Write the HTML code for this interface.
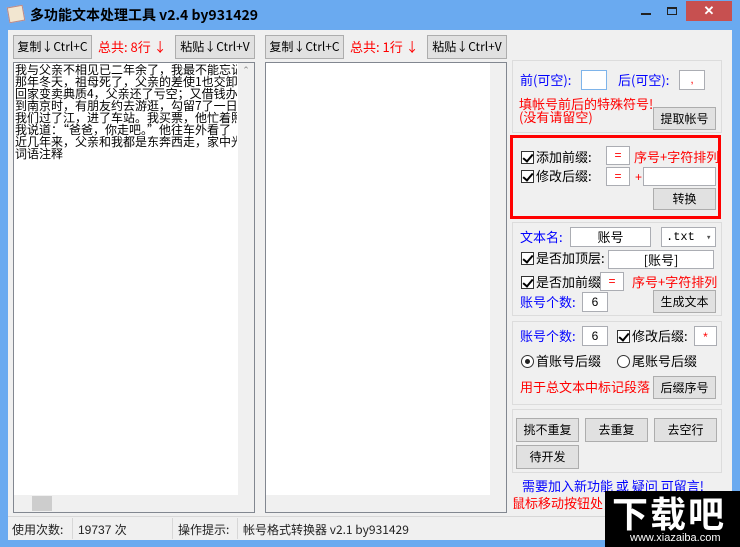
<!DOCTYPE html>
<html><head><meta charset="utf-8"><style>
*{box-sizing:border-box;margin:0;padding:0}
body{width:740px;height:547px;background:#6aaaf0;position:relative;overflow:hidden;font-family:"Liberation Sans","Noto Sans CJK SC",sans-serif;font-size:12px;color:#000}
.a{position:absolute;white-space:nowrap;line-height:14px}
.client{position:absolute;left:8px;top:30px;width:724px;height:510px;background:#f0f0f0}
.btn{position:absolute;background:#e1e1e1;border:1px solid #adadad;text-align:center;font-size:12px;font-family:"Noto Sans CJK SC",sans-serif;overflow:hidden}
.inp{position:absolute;background:#fff;border:1px solid #abadb3;text-align:center;font-size:12px;overflow:hidden}
.grp{position:absolute;border:1px solid #dcdcdc}
.cb{display:inline-block;width:13px;height:13px;border:1px solid #333;background:#fff;vertical-align:-2px;margin-right:2px;position:relative}
.cb:after{content:"";position:absolute;left:3px;top:0px;width:4px;height:8px;border:solid #000;border-width:0 2px 2px 0;transform:rotate(40deg)}
.blue{color:#0000ff}.red{color:#f00}
.ta{position:absolute;background:#fff;border:1px solid #828790}
.cn{font-family:"Noto Sans CJK SC",sans-serif;font-size:13px}
</style></head><body>
<div class="a" style="left:8px;top:6px;width:16px;height:16px;background:#f2e6d0;border:1px solid #b88;transform:rotate(-10deg)"></div>
<div class="a cn" style="left:30px;top:8px;font-size:14px;font-weight:bold">多功能文本处理工具 v2.4 by931429</div>
<div class="a" style="left:641px;top:13px;width:10px;height:2px;background:#222"></div>
<div class="a" style="left:667px;top:7px;width:10px;height:8px;border:1px solid #222;border-top-width:2px"></div>
<div class="a" style="left:686px;top:1px;width:46px;height:20px;background:#c75050;color:#fff;text-align:center;font-weight:bold;font-size:13px;line-height:20px">✕</div>
<div class="client"></div>

<div class="btn" style="left:13px;top:35px;width:79px;height:24px;line-height:22px">复制↓Ctrl+C</div>
<div class="a cn red" style="left:98px;top:40px">总共: 8行 ↓</div>
<div class="btn" style="left:175px;top:35px;width:80px;height:24px;line-height:22px">粘贴↓Ctrl+V</div>
<div class="ta" style="left:13px;top:62px;width:242px;height:451px"></div>
<div class="a" style="left:238px;top:63px;width:16px;height:433px;background:#f0f0f0;color:#888;font-size:9px;text-align:center">⌃</div>
<div class="a" style="left:14px;top:495px;width:240px;height:17px;background:#f0f0f0"></div>
<div class="a" style="left:32px;top:496px;width:20px;height:15px;background:#cdcdcd"></div>
<div class="a" style="left:15px;top:64px;width:222px;overflow:hidden;font-family:'Noto Sans CJK SC',sans-serif;font-size:12px;line-height:12px;white-space:pre">我与父亲不相见已二年余了，我最不能忘记
那年冬天，祖母死了，父亲的差使1也交卸
回家变卖典质4，父亲还了亏空；又借钱办
到南京时，有朋友约去游逛，勾留7了一日
我们过了江，进了车站。我买票，他忙着照
我说道：“爸爸，你走吧。”他往车外看了
近几年来，父亲和我都是东奔西走，家中光
词语注释</div>

<div class="btn" style="left:265px;top:35px;width:79px;height:24px;line-height:22px">复制↓Ctrl+C</div>
<div class="a cn red" style="left:350px;top:40px">总共: 1行 ↓</div>
<div class="btn" style="left:427px;top:35px;width:80px;height:24px;line-height:22px">粘贴↓Ctrl+V</div>
<div class="ta" style="left:265px;top:62px;width:242px;height:451px"></div>
<div class="a" style="left:490px;top:63px;width:16px;height:433px;background:#f0f0f0"></div>
<div class="a" style="left:266px;top:495px;width:240px;height:17px;background:#f0f0f0"></div>

<div class="grp" style="left:512px;top:60px;width:210px;height:73px"></div>
<div class="a cn blue" style="left:520px;top:73px">前(可空):</div>
<div class="inp" style="left:581px;top:70px;width:26px;height:20px;border-color:#7eb4ea"></div>
<div class="a cn blue" style="left:618px;top:73px">后(可空):</div>
<div class="inp red" style="left:679px;top:70px;width:26px;height:20px;line-height:17px">,</div>
<div class="a cn red" style="left:519px;top:97px;line-height:13px">填帐号前后的特殊符号!<br>(没有请留空)</div>
<div class="btn" style="left:653px;top:107px;width:63px;height:23px;line-height:21px">提取帐号</div>

<div class="a" style="left:510px;top:135px;width:211px;height:84px;border:3px solid #f00"></div>
<div class="a cn" style="left:521px;top:150px"><span class="cb"></span>添加前缀:</div>
<div class="inp red" style="left:606px;top:146px;width:24px;height:19px;line-height:16px">=</div>
<div class="a cn red" style="left:634px;top:150px">序号+字符排列</div>
<div class="a cn" style="left:521px;top:169px"><span class="cb"></span>修改后缀:</div>
<div class="inp red" style="left:606px;top:167px;width:24px;height:19px;line-height:16px">=</div>
<div class="a red" style="left:635px;top:170px">+</div>
<div class="inp" style="left:643px;top:167px;width:73px;height:19px"></div>
<div class="btn" style="left:653px;top:188px;width:63px;height:22px;line-height:20px">转换</div>

<div class="grp" style="left:512px;top:222px;width:210px;height:94px"></div>
<div class="a cn blue" style="left:520px;top:230px">文本名:</div>
<div class="inp cn" style="left:570px;top:227px;width:81px;height:20px;line-height:18px">账号</div>
<div class="inp" style="left:661px;top:227px;width:55px;height:20px;line-height:18px;text-align:left;padding-left:4px;font-family:'Liberation Mono',monospace">.txt <span style="font-size:9px;color:#555;margin-left:4px">▾</span></div>
<div class="a cn" style="left:521px;top:251px"><span class="cb"></span>是否加顶层:</div>
<div class="inp cn" style="left:608px;top:250px;width:106px;height:19px;line-height:17px">[账号]</div>
<div class="a cn" style="left:521px;top:275px"><span class="cb"></span>是否加前缀</div>
<div class="inp red" style="left:600px;top:272px;width:24px;height:19px;line-height:16px">=</div>
<div class="a cn red" style="left:632px;top:275px">序号+字符排列</div>
<div class="a cn blue" style="left:520px;top:295px">账号个数:</div>
<div class="inp" style="left:582px;top:292px;width:26px;height:20px;line-height:18px">6</div>
<div class="btn" style="left:653px;top:290px;width:63px;height:23px;line-height:21px">生成文本</div>

<div class="grp" style="left:512px;top:321px;width:210px;height:84px"></div>
<div class="a cn blue" style="left:520px;top:329px">账号个数:</div>
<div class="inp" style="left:582px;top:326px;width:26px;height:20px;line-height:18px">6</div>
<div class="a cn" style="left:617px;top:329px"><span class="cb"></span>修改后缀:</div>
<div class="inp red" style="left:694px;top:326px;width:23px;height:20px;line-height:20px">*</div>
<div class="a cn" style="left:521px;top:354px"><span style="display:inline-block;width:13px;height:13px;border:1px solid #333;border-radius:50%;background:#fff;vertical-align:-2px;margin-right:2px;position:relative"><span style="position:absolute;left:3px;top:3px;width:5px;height:5px;border-radius:50%;background:#222"></span></span>首账号后缀</div>
<div class="a cn" style="left:617px;top:354px"><span style="display:inline-block;width:13px;height:13px;border:1px solid #333;border-radius:50%;background:#fff;vertical-align:-2px;margin-right:2px"></span>尾账号后缀</div>
<div class="a cn red" style="left:520px;top:380px">用于总文本中标记段落</div>
<div class="btn" style="left:653px;top:376px;width:63px;height:23px;line-height:21px">后缀序号</div>

<div class="grp" style="left:512px;top:409px;width:210px;height:64px"></div>
<div class="btn" style="left:516px;top:418px;width:63px;height:24px;line-height:22px">挑不重复</div>
<div class="btn" style="left:585px;top:418px;width:63px;height:24px;line-height:22px">去重复</div>
<div class="btn" style="left:654px;top:418px;width:63px;height:24px;line-height:22px">去空行</div>
<div class="btn" style="left:516px;top:445px;width:63px;height:24px;line-height:22px">待开发</div>
<div class="a cn blue" style="left:522px;top:479px">需要加入新功能 或 疑问 可留言!</div>
<div class="a cn red" style="left:512px;top:496px">鼠标移动按钮处，</div>

<div class="a" style="left:8px;top:516px;width:724px;height:1px;background:#d7d7d7"></div>
<div class="a cn" style="left:12px;top:523px;font-size:12px;color:#222">使用次数:</div>
<div class="a" style="left:72px;top:518px;width:1px;height:21px;background:#d7d7d7"></div>
<div class="a" style="left:78px;top:523px;color:#222">19737 次</div>
<div class="a" style="left:172px;top:518px;width:1px;height:21px;background:#d7d7d7"></div>
<div class="a cn" style="left:178px;top:523px;font-size:12px;color:#222">操作提示:</div>
<div class="a" style="left:237px;top:518px;width:1px;height:21px;background:#d7d7d7"></div>
<div class="a cn" style="left:243px;top:523px;font-size:12px;color:#222">帐号格式转换器 v2.1 by931429</div>

<div class="a" style="left:605px;top:491px;width:135px;height:56px;background:#000"></div>
<div class="a cn" style="left:612px;top:493px;color:#fff;font-size:36px;font-weight:bold;letter-spacing:2px;line-height:38px">下载吧</div>
<div class="a" style="left:630px;top:532px;color:#fff;font-size:11px;line-height:12px">www.xiazaiba.com</div>
</body></html>
